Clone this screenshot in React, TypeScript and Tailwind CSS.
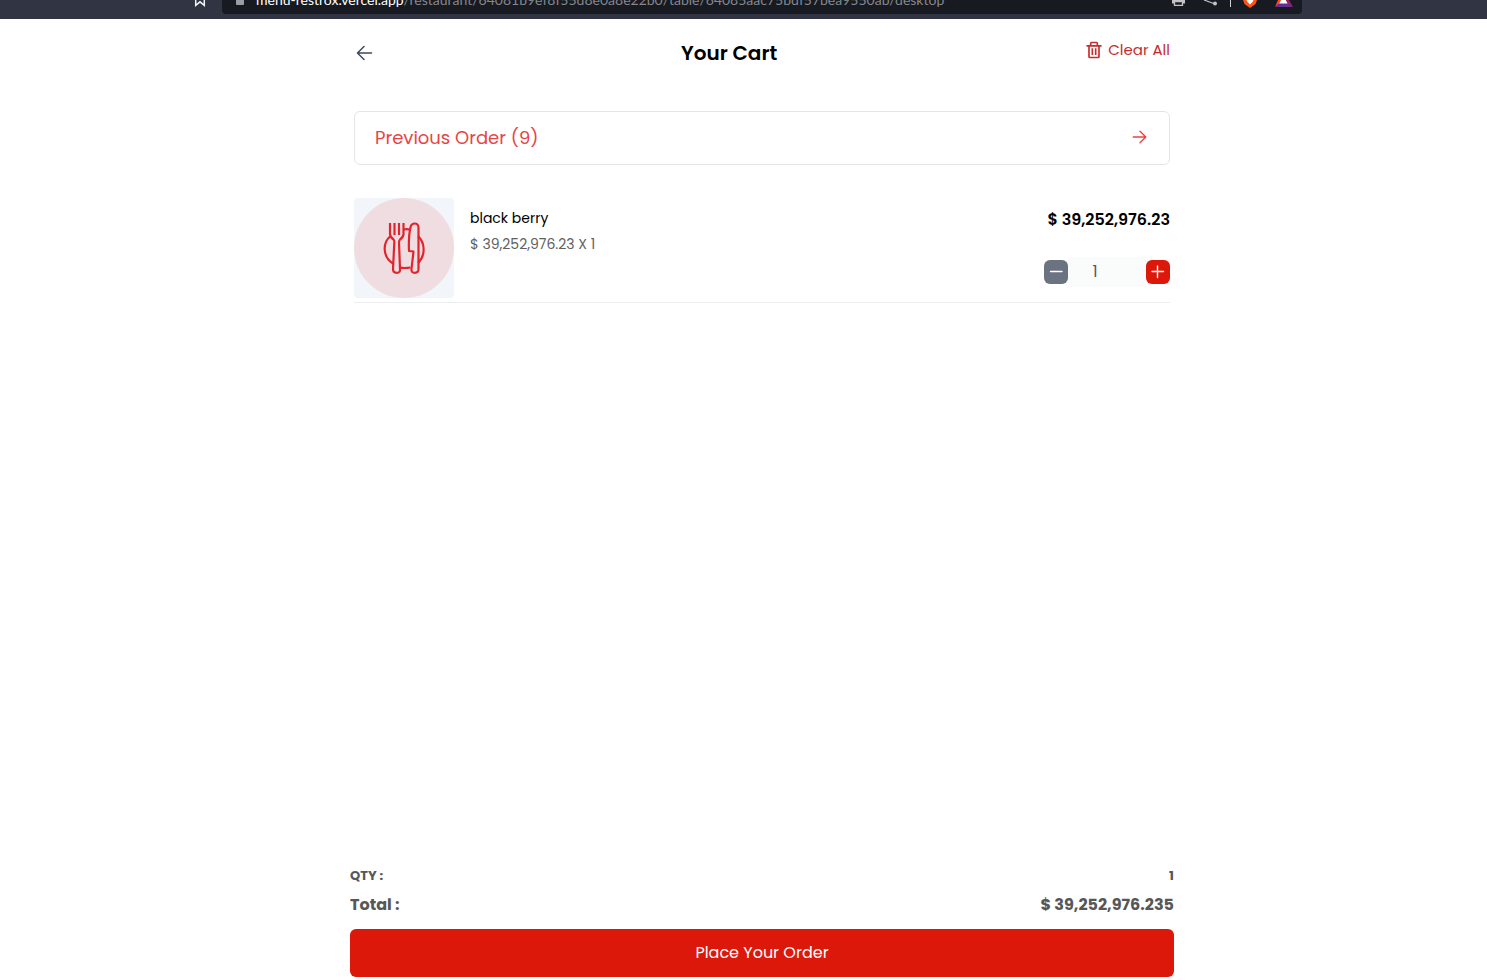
import { useState } from "react";
import { BiTrash } from "react-icons/bi";

function BrowserBar() {
  return (
    <div className="flex h-[19px] shrink-0 items-start overflow-hidden bg-[#313442] pr-[185px] pl-[193px]">
      <svg className="-mt-2 h-4 w-[14px] shrink-0" viewBox="0 0 14 16" fill="none" stroke="#f1f2f4" strokeWidth="1.5" aria-hidden="true">
        <path d="M2.7 1h8.6v12.3L7 9.8l-4.3 3.5z" />
      </svg>
      <div className="ml-[15px] flex h-[14px] min-w-0 flex-1 items-end rounded-b bg-[#171a21] pr-[9px] pl-[14px] font-['Lato','Noto_Sans',sans-serif] text-sm leading-[18px]">
        <span className="mb-[9px] h-[5px] w-2 shrink-0 rounded-b-[1px] bg-[#9a9ca6]" />
        <p className="mb-[5px] ml-3 min-w-0 flex-1 whitespace-nowrap text-[#85878c]">
          <span className="text-white">menu-restrox.vercel.app</span>
          /restaurant/64081b9ef8f55d8e0a8e22b0/table/64085aac75bdf57bea9550ab/desktop
        </p>
        <svg className="h-[14px] w-[122px] shrink-0" viewBox="0 0 122 14" fill="none" aria-hidden="true">
          <path d="M1 0h13v3.500H1z" fill="#c1c3c6" />
          <path d="M3.500 1.500h8v3.800h-8z" fill="#171a21" stroke="#c1c3c6" strokeWidth="1.300" />
          <path d="M33 0l11 4" stroke="#c1c3c6" strokeWidth="1.2" />
          <circle cx="44" cy="3.6" r="2" fill="#c1c3c6" />
          <path d="M59.500 0v7" stroke="#d0d1d4" />
          <path d="M72 0h14l-1.500 4L79 8l-5.500-4z" fill="#fb5414" />
          <path d="M75.500 0h7l-1 2-2.500 2.500-2.500-2.500z" fill="#fff" />
          <path d="M107 0h3l-1.500 3.500L104 7z" fill="#ff4724" />
          <path d="M110 0h5l2 4h-9z" fill="#fff" />
          <path d="M115 0h3l4 7-5-3z" fill="#9e1f63" />
          <path d="M104 7l4-3.500h9.500L122 7z" fill="#662d91" />
        </svg>
      </div>
    </div>
  );
}

function ArrowIcon({ className }: { className: string }) {
  return (
    <svg className={className} viewBox="0 0 20 20" fill="none" stroke="currentColor" strokeWidth="1.5" strokeLinecap="round" strokeLinejoin="round" aria-hidden="true">
      <path d="M17.500 10H4M10 3.500L3.500 10l6.500 6.500" />
    </svg>
  );
}

function MealImage() {
  return (
    <svg className="size-[100px] shrink-0 rounded bg-[#f2f6fb]" viewBox="0 0 100 100" fill="none" role="img" aria-label="Plate with fork and knife">
      <circle cx="50" cy="50" r="50" fill="#f0dde2" />
      <g stroke="#e2242c" strokeWidth="2.2" strokeLinejoin="round">
        <path d="M36 38.500C28.500 45 28.500 59 39 65.500M64 38C71.500 45 71.500 58 64 65M49.500 31.500q3-.6 6 0M45.500 69.500q5.500 1 11 0" />
        <path d="M36 25v11q0 3 3.500 5.500 1 .8.800 3L39 71q0 3.800 3.700 3.800T46 71l-1-26.500q0-2.200 1-3 3.500-2.500 3.500-5.500V25M40.500 25v12M45 25v12" />
        <path d="M59.500 53.500L55 53Q54.300 38 56.700 28.500q1-3 4-3 3.800 0 3.800 4.500V71q0 3.800-3.700 3.800T57.500 71z" />
      </g>
    </svg>
  );
}

export default function App() {
  const [quantity, setQuantity] = useState(1);
  return (
    <div className="flex min-h-screen flex-col bg-white font-['Poppins','Inter',sans-serif] text-black">
      <BrowserBar />
      <div className="flex flex-1 flex-col pl-[37px]">
        <main className="mx-auto flex w-full max-w-[824px] flex-1 flex-col pb-[3px]">
          <section className="flex flex-1 flex-col px-1">
            <header className="flex items-start justify-between pt-5">
              <button type="button" aria-label="Go back" className="mt-1 text-[#414958]">
                <ArrowIcon className="size-5" />
              </button>
              <h1 className="text-xl leading-7 font-semibold">Your Cart</h1>
              <button type="button" className="flex items-center gap-1 pt-px text-[15px] leading-5 text-[#c42e2e]">
                <BiTrash className="size-5" aria-hidden="true" />
                Clear All
              </button>
            </header>
            <button type="button" className="mt-11 flex h-[54px] items-center justify-between rounded-md border border-[#e5e5e5] px-5 text-lg text-[#e94444]">
              Previous Order (9)
              <ArrowIcon className="mb-0.5 size-[18px] rotate-180" />
            </button>
            <article className="mt-[33px] flex border-b border-[#ebedf0] pb-1">
              <MealImage />
              <div className="ml-4 flex-1 pt-2">
                <h2 className="text-sm leading-6">black berry</h2>
                <p className="mt-0.5 text-sm leading-6 text-[#606060]">$ 39,252,976.23 X 1</p>
              </div>
              <div className="flex flex-col items-end pt-[10px]">
                <p className="text-base leading-6 font-semibold">$ 39,252,976.23</p>
                <div className="mt-[25px] flex h-[30px] w-[126px] items-center">
                  <button type="button" aria-label="Decrease quantity" onClick={() => setQuantity(Math.max(1, quantity - 1))} className="flex size-6 shrink-0 items-center justify-center rounded-md bg-[#6b7280] text-white">
                    <svg className="size-4" viewBox="0 0 16 16" stroke="currentColor" strokeWidth="1.4" strokeLinecap="round" aria-hidden="true"><path d="M2.500 7.500h11.500" /></svg>
                  </button>
                  <input aria-label="Quantity" value={quantity} readOnly className="h-full min-w-0 flex-1 bg-[#fafcfb] pr-6 pb-0.5 text-center text-base text-[#505865] outline-none" />
                  <button type="button" aria-label="Increase quantity" onClick={() => setQuantity(quantity + 1)} className="flex size-6 shrink-0 items-center justify-center rounded-md bg-[#dc180b] text-white">
                    <svg className="size-4" viewBox="0 0 16 16" stroke="currentColor" strokeWidth="1.4" strokeLinecap="round" aria-hidden="true"><path d="M2 7.500h11.500M7.500 2v11.500" /></svg>
                  </button>
                </div>
              </div>
            </article>
          </section>
          <footer className="text-[#575757]">
            <div className="flex justify-between text-[13px] leading-5 font-bold">
              <span>QTY :</span>
              <span>1</span>
            </div>
            <div className="mt-[7px] flex justify-between text-base leading-6 font-bold">
              <span>Total :</span>
              <span>$ 39,252,976.235</span>
            </div>
            <button type="button" className="mt-3 h-12 w-full rounded-md bg-[#dc180b] text-base text-white">Place Your Order</button>
          </footer>
        </main>
      </div>
    </div>
  );
}
